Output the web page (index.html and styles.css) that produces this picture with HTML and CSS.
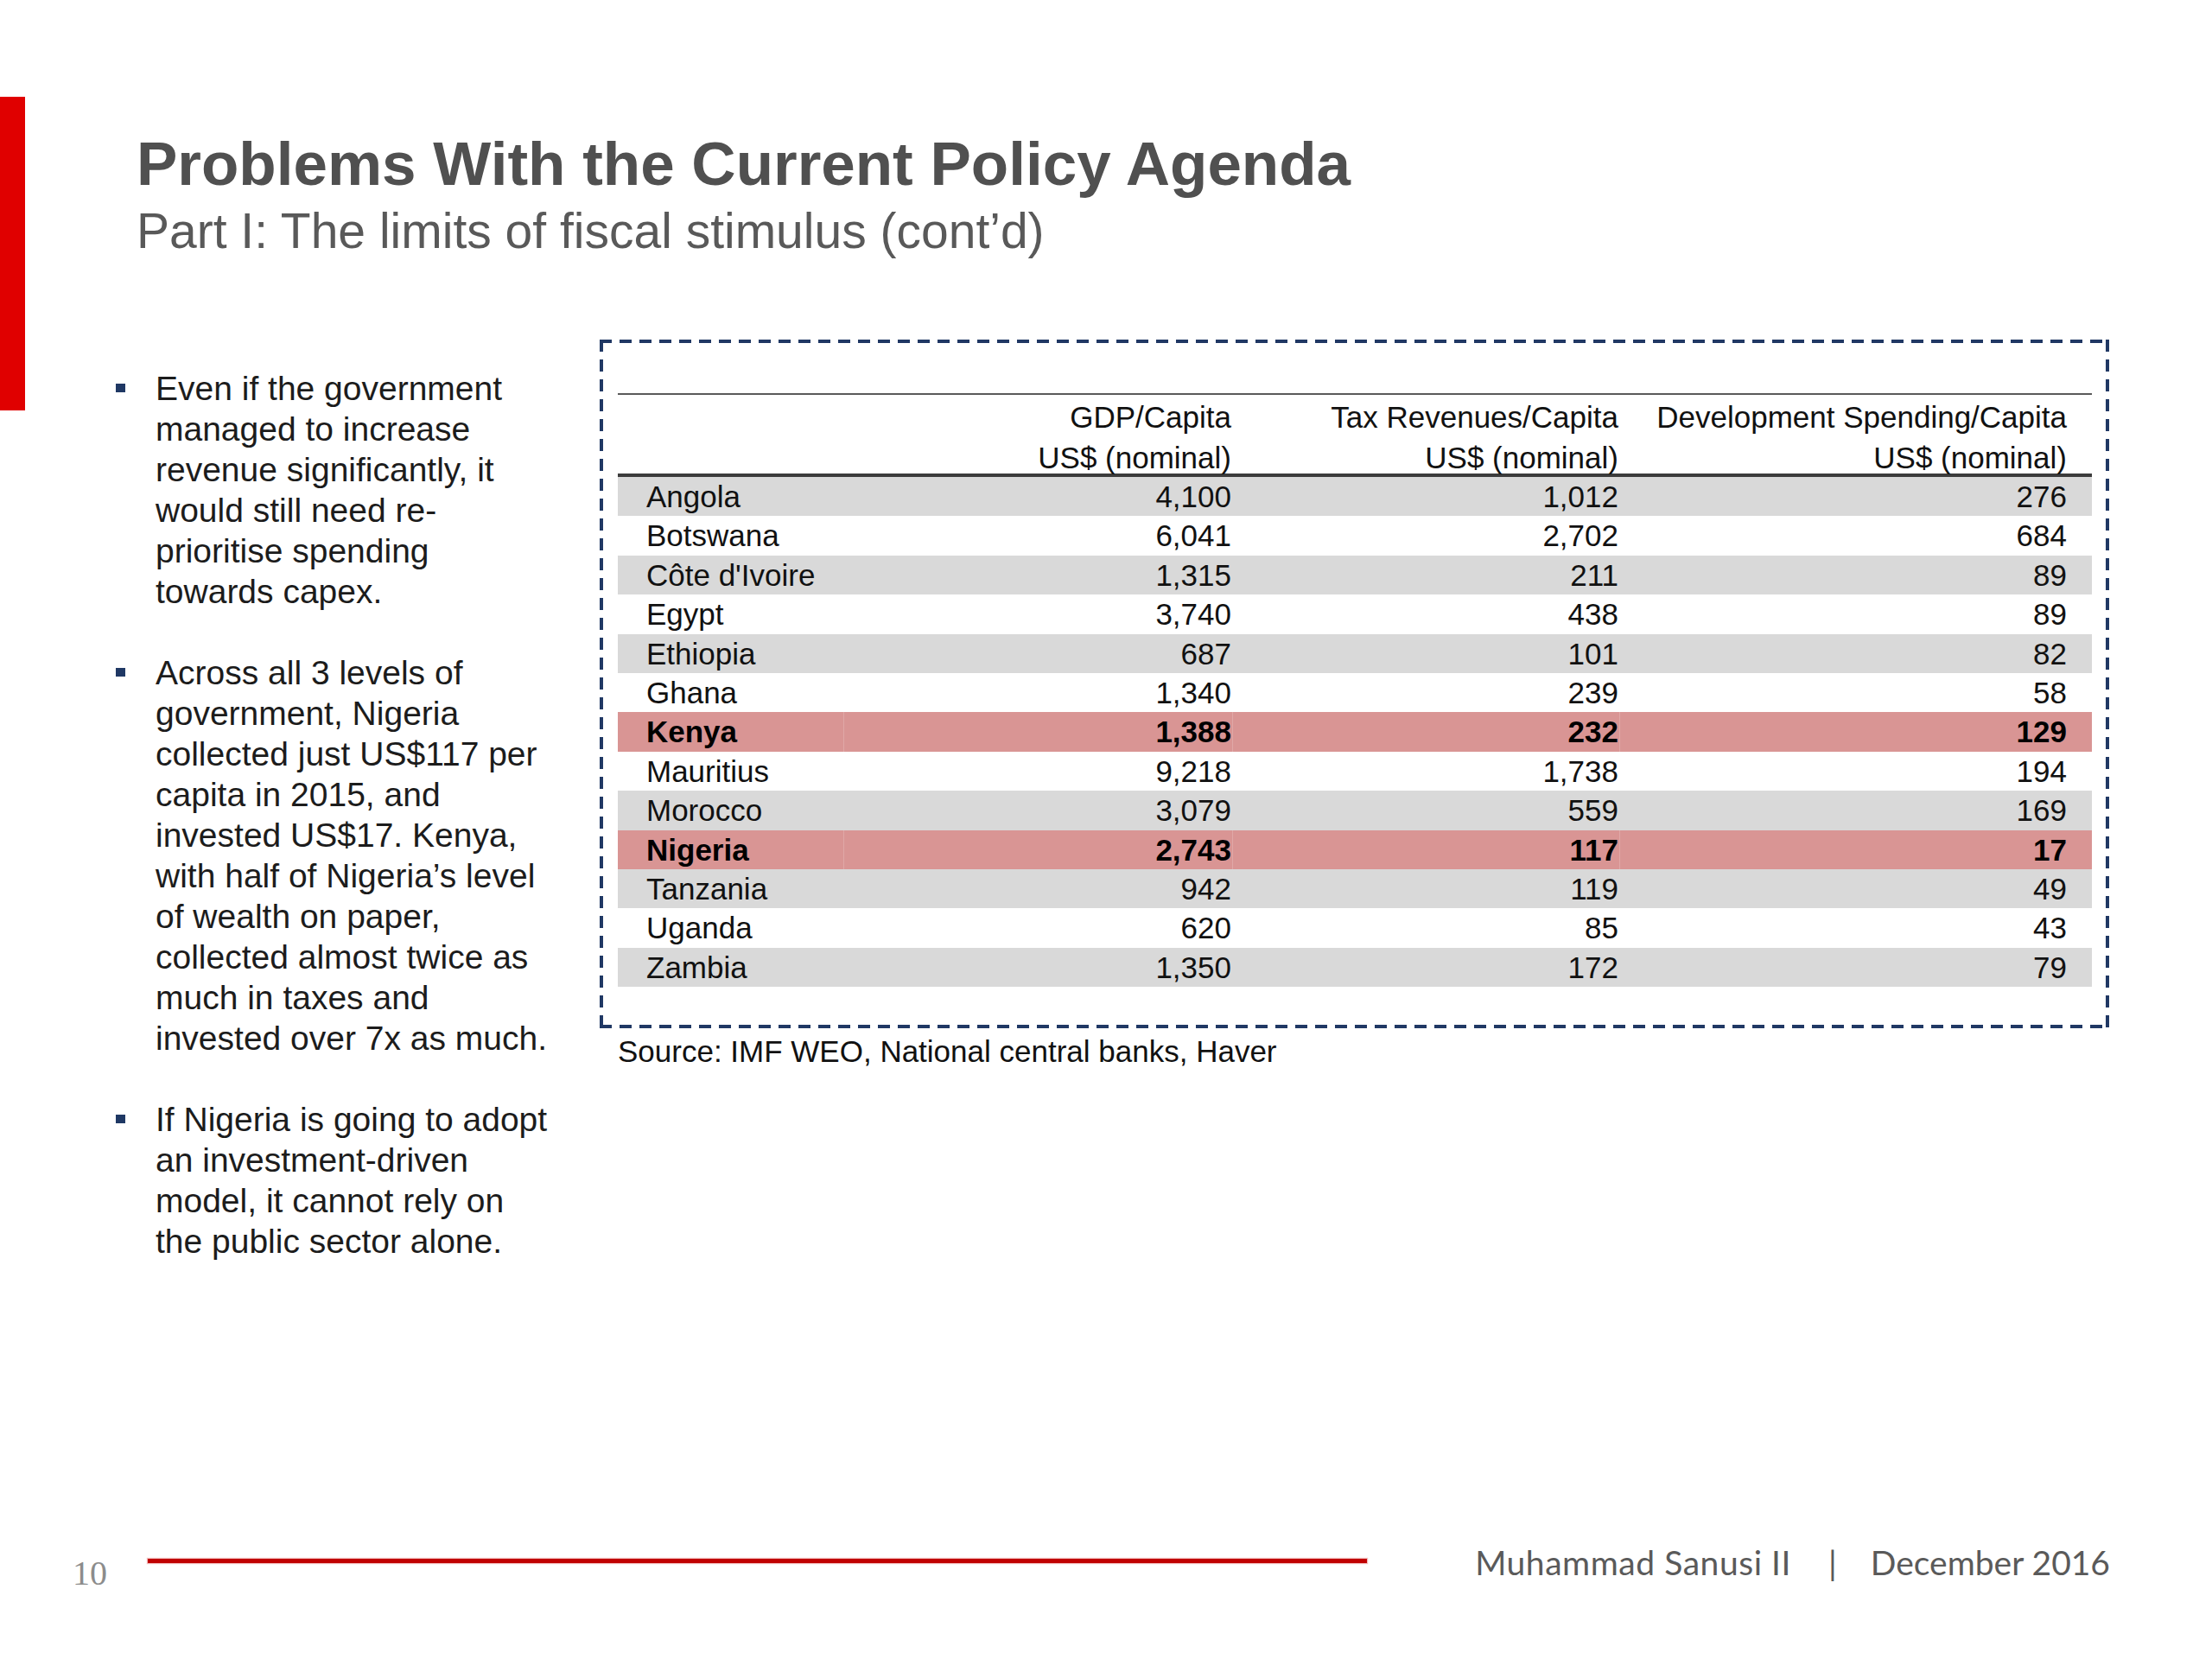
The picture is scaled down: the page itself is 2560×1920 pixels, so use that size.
FILE: index.html
```html
<!DOCTYPE html>
<html lang="en">
<head>
<meta charset="utf-8">
<title>Problems With the Current Policy Agenda</title>
<link rel="stylesheet" href="styles.css">
</head>
<body>
<div class="slide">
  <div class="upper">
    <div class="accent"></div>
    <div class="main">
      <h1 class="title">Problems With the Current Policy Agenda</h1>
      <h2 class="subtitle">Part I: The limits of fiscal stimulus (cont’d)</h2>
      <div class="content">
        <ul class="bullets">
          <li><span>Even if the government<br>managed to increase<br>revenue significantly, it<br>would still need re-<br>prioritise spending<br>towards capex.</span></li>
          <li><span>Across all 3 levels of<br>government, Nigeria<br>collected just US$117 per<br>capita in 2015, and<br>invested US$17. Kenya,<br>with half of Nigeria’s level<br>of wealth on paper,<br>collected almost twice as<br>much in taxes and<br>invested over 7x as much.</span></li>
          <li><span>If Nigeria is going to adopt<br>an investment-driven<br>model, it cannot rely on<br>the public sector alone.</span></li>
        </ul>
        <div class="figure">
          <div class="dashbox">
            <table class="data">
              <colgroup>
                <col class="c-country"><col class="c-gdp"><col class="c-tax"><col class="c-dev">
              </colgroup>
              <thead>
                <tr>
                  <th><div class="hcell"></div></th>
                  <th><div class="hcell">GDP/Capita<br>US$ (nominal)</div></th>
                  <th><div class="hcell">Tax Revenues/Capita<br>US$ (nominal)</div></th>
                  <th><div class="hcell">Development Spending/Capita<br>US$ (nominal)</div></th>
                </tr>
              </thead>
              <tbody>
                <tr class="shade"><td>Angola</td><td>4,100</td><td>1,012</td><td>276</td></tr>
                <tr><td>Botswana</td><td>6,041</td><td>2,702</td><td>684</td></tr>
                <tr class="shade"><td>Côte d'Ivoire</td><td>1,315</td><td>211</td><td>89</td></tr>
                <tr><td>Egypt</td><td>3,740</td><td>438</td><td>89</td></tr>
                <tr class="shade"><td>Ethiopia</td><td>687</td><td>101</td><td>82</td></tr>
                <tr><td>Ghana</td><td>1,340</td><td>239</td><td>58</td></tr>
                <tr class="hl"><td>Kenya</td><td>1,388</td><td>232</td><td>129</td></tr>
                <tr><td>Mauritius</td><td>9,218</td><td>1,738</td><td>194</td></tr>
                <tr class="shade"><td>Morocco</td><td>3,079</td><td>559</td><td>169</td></tr>
                <tr class="hl"><td>Nigeria</td><td>2,743</td><td>117</td><td>17</td></tr>
                <tr class="shade"><td>Tanzania</td><td>942</td><td>119</td><td>49</td></tr>
                <tr><td>Uganda</td><td>620</td><td>85</td><td>43</td></tr>
                <tr class="shade"><td>Zambia</td><td>1,350</td><td>172</td><td>79</td></tr>
              </tbody>
            </table>
          </div>
          <p class="source">Source: IMF WEO, National central banks, Haver</p>
        </div>
      </div>
    </div>
  </div>
  <footer class="footer">
    <div class="pgnum">10</div>
    <div class="rule"></div>
    <div class="byline"><span class="name">Muhammad Sanusi II</span><span class="pipe">|</span><span>December 2016</span></div>
  </footer>
</div>
</body>
</html>
```

FILE: styles.css
```css
html, body {
  margin: 0;
  padding: 0;
  background: #ffffff;
}

.slide {
  width: 2560px;
  height: 1920px;
  display: flex;
  flex-direction: column;
  font-family: "Liberation Sans", Arial, sans-serif;
  background: #ffffff;
  overflow: hidden;
}

.upper {
  height: 1780px;
  flex: none;
  display: flex;
}

.accent {
  flex: none;
  width: 29px;
  height: 363px;
  margin-top: 112px;
  background: #e00000;
}

.main {
  flex: 1;
  padding-left: 105px;
  padding-top: 150px;
}

.title {
  margin: 0 0 0 24px;
  font-size: 71px;
  line-height: 80px;
  font-weight: bold;
  color: #505050;
}

.subtitle {
  margin: 5px 0 0 24px;
  font-size: 57px;
  line-height: 64px;
  font-weight: normal;
  color: #595959;
}

.content {
  display: flex;
  align-items: flex-start;
  margin-top: 94px;
}

.bullets {
  flex: none;
  width: 560px;
  margin: 33px 0 0 0;
  padding: 0;
  list-style: none;
  font-size: 39px;
  line-height: 47px;
  color: #1c1c1c;
  white-space: nowrap;
}

.bullets li {
  display: flex;
  align-items: flex-start;
  margin-bottom: 47px;
}

.bullets li::before {
  content: "";
  flex: none;
  width: 11px;
  height: 10px;
  margin-top: 18px;
  margin-right: 35px;
  background: #1f3864;
}

.figure {
  flex: none;
  width: 1747px;
}

.dashbox {
  padding: 62px 20px 48px 21px;
  background:
    repeating-linear-gradient(90deg, #203864 0 14px, transparent 14px 23px) left top / 100% 4px no-repeat,
    repeating-linear-gradient(90deg, #203864 0 14px, transparent 14px 23px) left bottom / 100% 4px no-repeat,
    repeating-linear-gradient(180deg, #203864 0 14px, transparent 14px 23px) left top / 4px 100% no-repeat,
    repeating-linear-gradient(180deg, #203864 0 14px, transparent 14px 23px) right top / 4px 100% no-repeat;
}

.data {
  width: 1706px;
  table-layout: fixed;
  border-collapse: separate;
  border-spacing: 0;
  font-size: 35px;
  color: #111111;
}

.c-country { width: 261px; }
.c-gdp { width: 450px; }
.c-tax { width: 448px; }
.c-dev { width: 547px; }

.data th {
  font-weight: normal;
  text-align: right;
  vertical-align: top;
  padding: 2px 1px 0 0;
  border-top: 2px solid #5a5a5a;
  border-bottom: 4px solid #3c3c3c;
  white-space: nowrap;
}

.hcell {
  height: 89px;
  line-height: 47px;
}

.data th:last-child {
  padding-right: 29px;
}

.data td {
  height: 45.4px;
  padding: 0 1px 0 0;
  line-height: 45.4px;
  text-align: right;
  white-space: nowrap;
}

.data td:first-child {
  text-align: left;
  padding-left: 33px;
}

.data td:last-child {
  padding-right: 29px;
}

.data tr.shade td {
  background: #d9d9d9;
}

.data tr.hl td {
  background: #d99594;
  font-weight: bold;
  color: #000000;
}

.data tr.hl td + td {
  box-shadow: inset 1px 0 0 rgba(255, 255, 255, 0.18);
}

.source {
  margin: 7px 0 0 21px;
  font-size: 35px;
  line-height: 40px;
  color: #111111;
}

.footer {
  flex: 1;
  display: flex;
  align-items: flex-start;
  padding-left: 84px;
  padding-right: 118px;
}

.pgnum {
  flex: none;
  width: 87px;
  margin-top: 20px;
  font-family: "Liberation Serif", "Times New Roman", serif;
  font-size: 40px;
  line-height: 42px;
  color: #8c8c8c;
}

.rule {
  flex: none;
  width: 1411px;
  height: 5px;
  margin-top: 24px;
  background: #c00000;
  box-shadow: 0 0 1px 1px rgba(230, 120, 120, 0.5);
}

.byline {
  margin-left: auto;
  margin-top: 8px;
  font-family: Lato, "Open Sans", sans-serif;
  font-size: 39px;
  line-height: 40px;
  color: #5a5a5a;
  white-space: nowrap;
}

.name {
  letter-spacing: 0.55px;
}

.pipe {
  margin: 0 39px 0 43px;
}
```
